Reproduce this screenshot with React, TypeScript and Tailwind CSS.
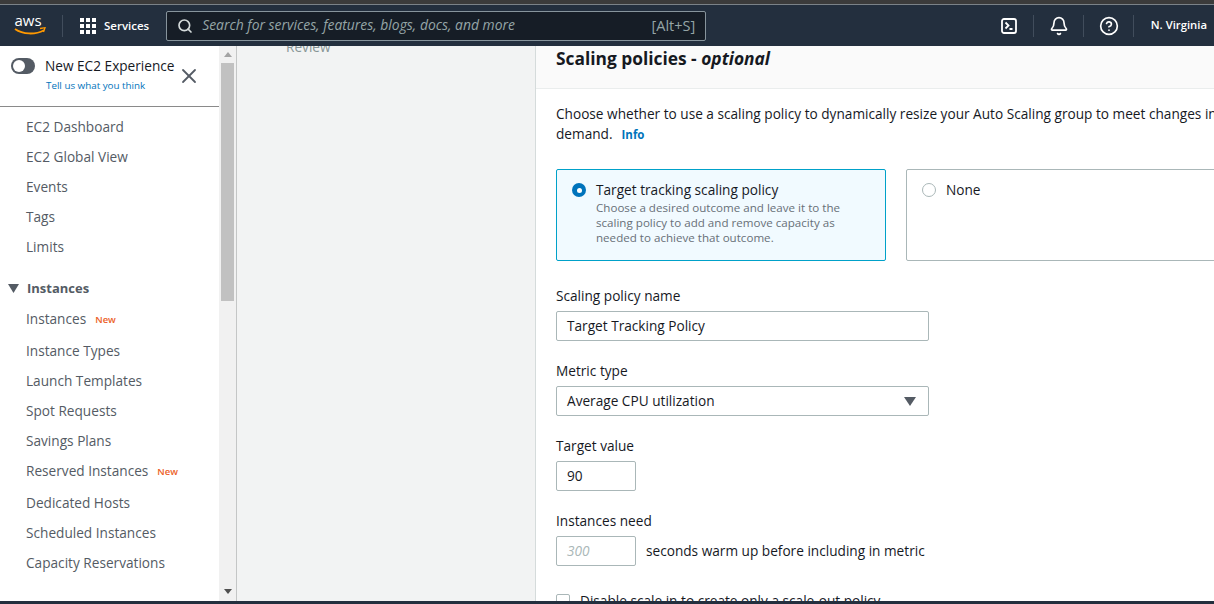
import { Search, Bell, CircleHelp, X } from "lucide-react";

const font = { fontFamily: '"Open Sans", sans-serif' };

function NavItem({ label, isNew, className }: { label: string; isNew?: boolean; className: string }) {
  return (
    <div className={`flex items-center pl-[26px] text-[13.65px] leading-[20px] text-[#545b64] ${className}`}>
      <span>{label}</span>
      {isNew && <span className="ml-[9px] mt-[2px] text-[9.5px] font-semibold text-[#ec5f29]">New</span>}
    </div>
  );
}

function Caret() {
  return (
    <svg width="11" height="9" viewBox="0 0 11 9" className="mr-[8px]">
      <path d="M0 0h11L5.5 9z" fill="#545b64" />
    </svg>
  );
}

function Sidebar() {
  return (
    <div className="flex w-[237px] shrink-0 border-r border-[#c4c6c6] bg-white">
      <div className="w-[219px] shrink-0 overflow-hidden">
        <div className="relative box-content h-[60px] border-b border-[#8a8a8a]">
          <div className="flex items-start pl-[11px] pt-[10px]">
            <div className="mt-[2px] flex h-[16px] w-[24px] items-center rounded-full bg-[#545b64] pl-[2px]">
              <div className="h-[12px] w-[12px] rounded-full bg-white" />
            </div>
            <div className="ml-[10px]">
              <div className="text-[13.65px] leading-[20px] text-[#16191f]">New EC2 Experience</div>
              <div className="mt-[2px] pl-[1px] text-[9.8px] leading-[16px] text-[#0073bb]">Tell us what you think</div>
            </div>
          </div>
          <X className="absolute left-[177px] top-[18px] text-[#545b64]" size={24} strokeWidth={1.8} />
        </div>
        <div className="pt-[5px]">
          <NavItem label="EC2 Dashboard" className="h-[30px]" />
          <NavItem label="EC2 Global View" className="h-[30px]" />
          <NavItem label="Events" className="h-[30px]" />
          <NavItem label="Tags" className="h-[30px]" />
          <NavItem label="Limits" className="h-[30px]" />
          <div className="mt-[12px] flex h-[29px] items-center pl-[8px]">
            <Caret />
            <span className="text-[13px] font-bold text-[#545b64]">Instances</span>
          </div>
          <NavItem label="Instances" isNew className="h-[33px] pb-[1px]" />
          <NavItem label="Instance Types" className="h-[30px]" />
          <NavItem label="Launch Templates" className="h-[30px]" />
          <NavItem label="Spot Requests" className="h-[30px]" />
          <NavItem label="Savings Plans" className="h-[30px]" />
          <NavItem label="Reserved Instances" isNew className="h-[32px] pb-[2px]" />
          <NavItem label="Dedicated Hosts" className="h-[30px]" />
          <NavItem label="Scheduled Instances" className="h-[30px]" />
          <NavItem label="Capacity Reservations" className="h-[30px]" />
          <div className="mt-[14px] flex h-[30px] items-center pl-[8px]">
            <Caret />
            <span className="text-[13px] font-bold text-[#545b64]">Images</span>
          </div>
        </div>
      </div>
      <div className="flex w-[17px] shrink-0 flex-col items-center bg-[#f1f1f1]">
        <svg width="8" height="5" viewBox="0 0 8 5" className="mt-[6px] mb-[6px]">
          <path d="M0 5h8L4 0z" fill="#a3a3a3" />
        </svg>
        <div className="h-[238px] w-[13px] bg-[#c1c1c1]" />
        <svg width="8" height="5" viewBox="0 0 8 5" className="mt-auto mb-[7px]">
          <path d="M0 0h8L4 5z" fill="#505050" />
        </svg>
      </div>
    </div>
  );
}

function Main() {
  return (
    <div className="min-w-0 flex-1 overflow-hidden border-l border-[#d5dbdb] bg-white">
      <div className="flex h-[43px] items-start border-b border-[#eaeded] bg-[#fafafa] pl-[20px]">
        <h2 className="w-[400px] text-[17.35px] leading-[25px] font-bold text-[#16191f]">
          Scaling policies - <i>optional</i>
        </h2>
      </div>
      <div className="w-[720px] pl-[20px] pt-[15px] text-[13.65px]">
        <p className="whitespace-nowrap leading-[20px] text-[#16191f]">
          Choose whether to use a scaling policy to dynamically resize your Auto Scaling group to meet changes in
        </p>
        <p className="leading-[20px] text-[#16191f]">
          demand.
          <span className="ml-[9px] text-[11.5px] font-bold text-[#0073bb]">Info</span>
        </p>
        <div className="mt-[24px] flex gap-[20px]">
          <div className="flex h-[92px] w-[330px] shrink-0 rounded-[2px] border border-[#00a1c9] bg-[#f1faff] pl-[15px] pt-[11px]">
            <div className="mt-[2px] flex h-[14px] w-[14px] items-center justify-center rounded-full bg-[#0073bb]">
              <div className="h-[5px] w-[5px] rounded-full bg-white" />
            </div>
            <div className="ml-[10px]">
              <div className="leading-[18px] text-[#16191f]">Target tracking scaling policy</div>
              <div className="mt-[1px] w-[270px] text-[11.6px] leading-[15px] text-[#687078]">
                Choose a desired outcome and leave it to the scaling policy to add and remove capacity as needed to achieve that outcome.
              </div>
            </div>
          </div>
          <div className="flex h-[92px] w-[400px] shrink-0 rounded-[2px] border border-[#aab7b8] bg-white pl-[15px] pt-[11px]">
            <div className="mt-[2px] h-[14px] w-[14px] rounded-full border border-[#aab7b8]" />
            <div className="ml-[10px] leading-[18px] text-[#16191f]">None</div>
          </div>
        </div>
        <div className="mt-[25px] leading-[20px] text-[#16191f]">Scaling policy name</div>
        <div className="mt-[5px] flex h-[30px] w-[373px] items-center rounded-[2px] border border-[#aab7b8] pl-[10px] text-[#16191f]">
          Target Tracking Policy
        </div>
        <div className="mt-[20px] leading-[20px] text-[#16191f]">Metric type</div>
        <div className="mt-[5px] flex h-[30px] w-[373px] items-center justify-between rounded-[2px] border border-[#aab7b8] pl-[10px] pr-[12px] text-[#16191f]">
          <span>Average CPU utilization</span>
          <svg width="12" height="9" viewBox="0 0 12 9">
            <path d="M0 0h12L6 9z" fill="#545b64" />
          </svg>
        </div>
        <div className="mt-[20px] leading-[20px] text-[#16191f]">Target value</div>
        <div className="mt-[5px] flex h-[30px] w-[80px] items-center rounded-[2px] border border-[#aab7b8] pl-[10px] text-[#16191f]">
          90
        </div>
        <div className="mt-[20px] leading-[20px] text-[#16191f]">Instances need</div>
        <div className="mt-[5px] flex items-center">
          <div className="flex h-[30px] w-[80px] items-center rounded-[2px] border border-[#aab7b8] pl-[10px] italic text-[#aab7b8]">
            300
          </div>
          <span className="ml-[10px] text-[#16191f]">seconds warm up before including in metric</span>
        </div>
        <div className="mt-[25px] flex items-center">
          <div className="h-[14px] w-[14px] shrink-0 rounded-[2px] border border-[#aab7b8]" />
          <span className="ml-[10px] whitespace-nowrap leading-[20px] text-[#16191f]">
            Disable scale in to create only a scale-out policy
          </span>
        </div>
      </div>
    </div>
  );
}

export default function App() {
  return (
    <div className="flex h-[604px] w-[1214px] flex-col overflow-hidden bg-white" style={font}>
      <div className="h-[4px] shrink-0 bg-[#3b3b3b]" />
      <header className="flex h-[42px] shrink-0 items-center border-t border-[#7b8288] bg-[#232f3e] text-white">
        <svg width="32" height="24" viewBox="0 0 32 24" className="ml-[14px]">
          <text x="0.5" y="12" fontSize="15" fill="#fff" fontFamily="Open Sans, sans-serif">aws</text>
          <path d="M1 15c8 5.500 20 6 29 1.200" fill="none" stroke="#ff9900" strokeWidth="1.800" />
          <path d="M26 14.500l5-.800-1.500 4.300" fill="none" stroke="#ff9900" strokeWidth="1.300" />
        </svg>
        <div className="ml-[16px] h-[22px] w-px bg-[#414d5c]" />
        <div className="ml-[17px] grid grid-cols-3 gap-[2px]">
          {Array.from({ length: 9 }).map((_, i) => (
            <div key={i} className="h-[4px] w-[4px] bg-white" />
          ))}
        </div>
        <span className="ml-[8px] text-[11.5px] font-semibold">Services</span>
        <div className="ml-[17px] flex h-[30px] w-[540px] items-center rounded-[2px] border border-[#87949c] bg-[#161d26] pl-[10px] pr-[10px]">
          <Search size={16} strokeWidth={2.5} className="text-[#d5dbdb]" />
          <span className="ml-[9px] text-[13.9px] italic text-[#95a5a6]">Search for services, features, blogs, docs, and more</span>
          <span className="ml-auto text-[14.5px] text-[#95a5a6]">[Alt+S]</span>
        </div>
        <div className="ml-auto flex items-center">
          <svg width="16" height="16" viewBox="0 0 16 16" fill="none" stroke="#fff" strokeWidth="1.800">
            <rect x="1" y="1" width="14" height="14" rx="2" />
            <path d="M4.500 4.500l3 3-3 3M8.500 11h3" />
          </svg>
          <div className="ml-[16px] h-[22px] w-px bg-[#414d5c]" />
          <Bell size={20} strokeWidth={2} className="ml-[15px]" />
          <div className="ml-[14px] h-[22px] w-px bg-[#414d5c]" />
          <CircleHelp size={20} strokeWidth={2} className="ml-[15px]" />
          <div className="ml-[14px] h-[22px] w-px bg-[#414d5c]" />
          <span className="ml-[17px] mr-[7px] text-[11.3px] font-semibold">N. Virginia</span>
        </div>
      </header>
      <div className="flex min-h-0 flex-1 overflow-hidden">
        <Sidebar />
        <div className="w-[298px] shrink-0 overflow-hidden bg-[#f2f3f3] pl-[49px]">
          <div className="mt-[-9px] text-[13.65px] leading-[20px] text-[#879596]">Review</div>
        </div>
        <Main />
      </div>
      <div className="h-[3px] shrink-0 bg-[#232f3e]" />
    </div>
  );
}
